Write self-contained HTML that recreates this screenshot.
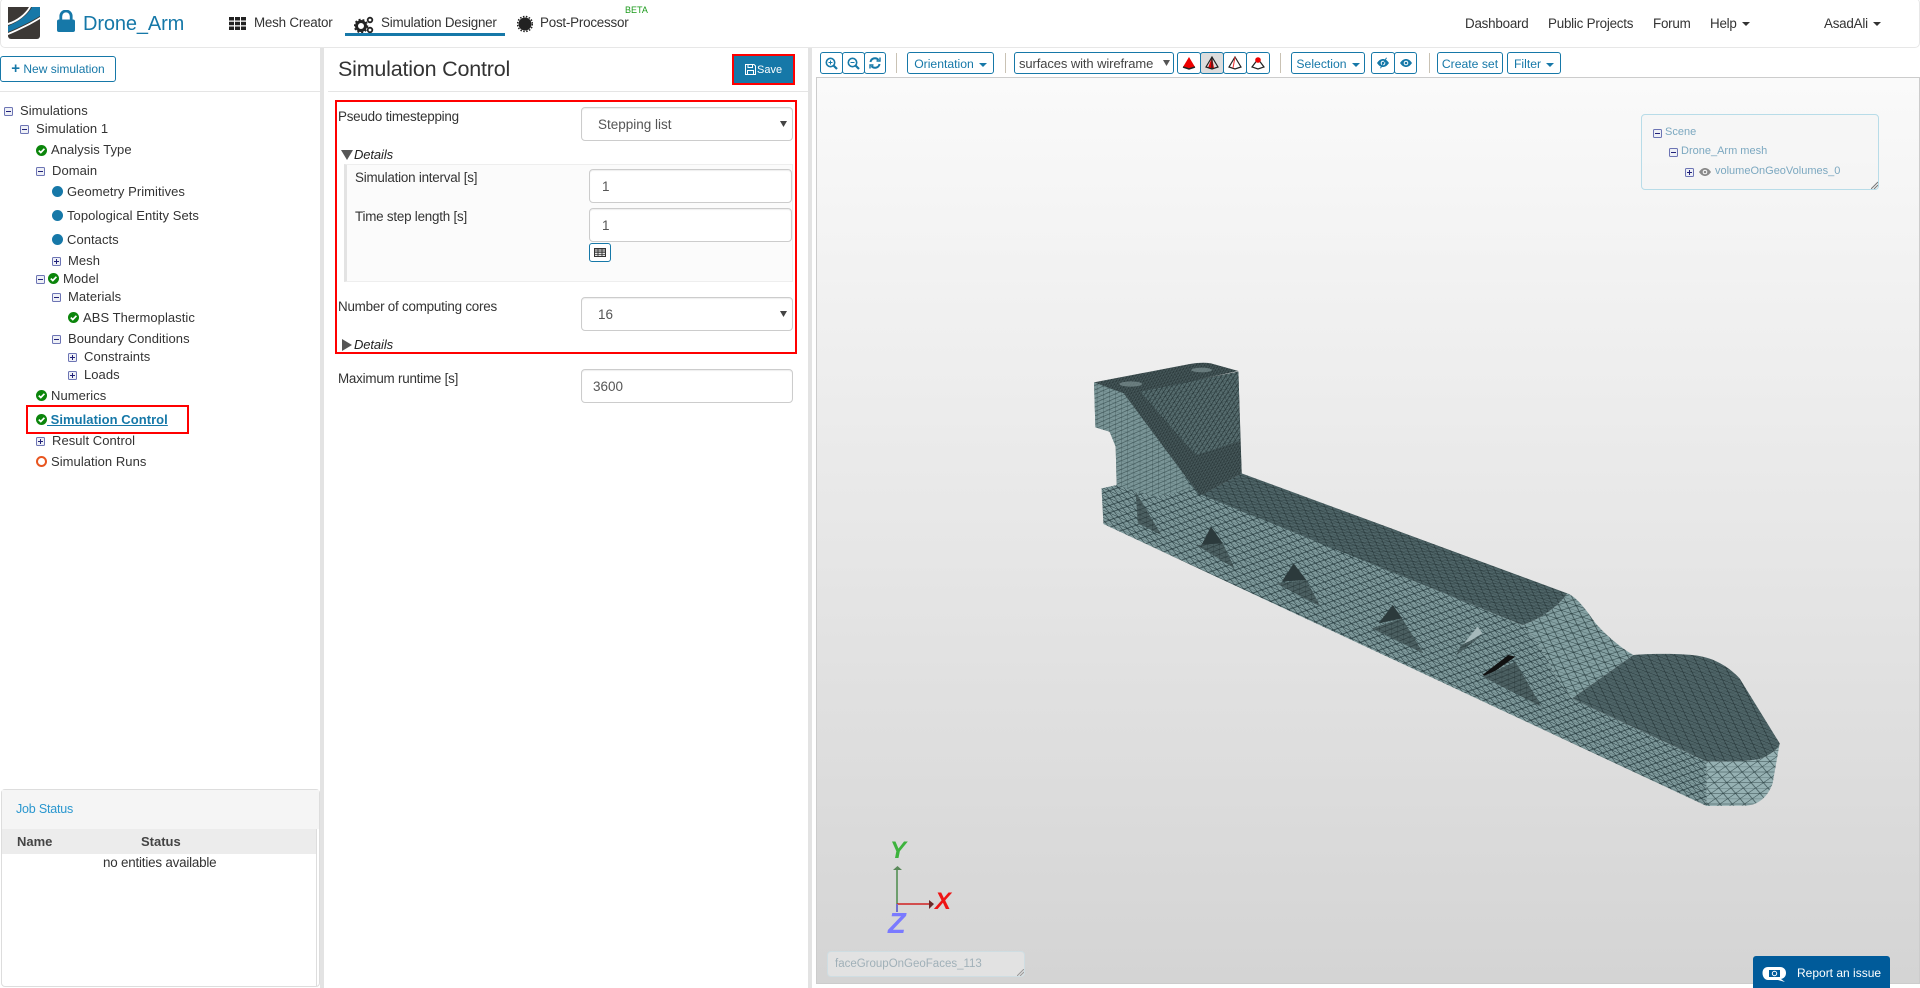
<!DOCTYPE html>
<html><head><meta charset="utf-8"><title>Drone_Arm</title>
<style>
html,body{margin:0;padding:0;width:1920px;height:988px;overflow:hidden;background:#fff;font-family:"Liberation Sans",sans-serif;color:#333;font-size:13px}
.a{position:absolute;box-sizing:border-box}
.t{position:absolute;white-space:nowrap;line-height:20px;height:20px}
.l{font-size:13.4px;letter-spacing:-.22px;color:#333}
.b{position:absolute;box-sizing:border-box;border:1px solid #1678a8;border-radius:3px;background:#fff;color:#1678a8;text-align:center;white-space:nowrap;line-height:22px;font-size:12.2px}
.inp{position:absolute;box-sizing:border-box;border:1px solid #ccc;border-radius:4px;background:#fff;color:#555;font-size:13.5px;line-height:34px;box-shadow:inset 0 1px 1px rgba(0,0,0,.07)}
.tree{font-size:13px;color:#333;letter-spacing:.05px}
.sc{color:#7ca8c0;font-size:11px}
.tg{position:absolute;width:9px;height:9px}
.caret{display:inline-block;width:0;height:0;border-left:4px solid transparent;border-right:4px solid transparent;border-top:4px solid currentColor;vertical-align:middle;margin-left:5px}
.sep{position:absolute;top:53px;width:1px;height:20px;background:#c9c2b4}
svg{position:absolute;display:block}
</style></head><body>
<svg width="0" height="0" style="position:absolute"><defs>
<symbol id="m" viewBox="0 0 9 9"><rect x=".5" y=".5" width="8" height="8" rx="1" fill="#eef0f6" stroke="#6c74b4"/><path d="M2 4.5H7" stroke="#22227a" stroke-width="1"/></symbol>
<symbol id="p" viewBox="0 0 9 9"><rect x=".5" y=".5" width="8" height="8" rx="1" fill="#eef0f6" stroke="#6c74b4"/><path d="M2 4.5H7M4.5 2V7" stroke="#22227a" stroke-width="1"/></symbol>
<symbol id="c" viewBox="0 0 11 11"><circle cx="5.5" cy="5.5" r="5.5" fill="#0b850b"/><path d="M2.8 5.6L4.8 7.5L8.4 3.8" fill="none" stroke="#fff" stroke-width="1.7"/></symbol>
<symbol id="eye" viewBox="0 0 12 8"><path d="M0 4C2 1 4 0 6 0s4 1 6 4c-2 3-4 4-6 4S2 7 0 4z" fill="currentColor"/><circle cx="6" cy="4" r="2.3" fill="#fff"/><circle cx="6" cy="4" r="1.3" fill="currentColor"/></symbol>
</defs></svg>

<!-- nav -->
<div class="a" style="left:0;top:-2px;width:1920px;height:50px;border:1px solid #e7e7e7;border-radius:5px;background:#fff"></div>
<svg style="left:8px;top:7px" width="32" height="32" viewBox="0 0 32 32"><path d="M0 0H32V29a3 3 0 0 1-3 3H3a3 3 0 0 1-3-3z" fill="#3c3835"/><path d="M24 0H32V9C24 14 12 20 0 25V19C10 15 20 8 24 0z" fill="#1678a8"/><path d="M21 0H23C19 8 10 15 0 18V16C9 13 17 7 21 0z" fill="#fff"/><path d="M0 26C12 21 24 15 32 10V12C24 17 12 23 0 28z" fill="#fff"/></svg>
<svg style="left:57px;top:10px" width="18" height="22" viewBox="0 0 18 22"><path d="M3.8 11V6.200a5.200 5.200 0 0 1 10.400 0V11" fill="none" stroke="#1678a8" stroke-width="2.800"/><rect x="0" y="9.500" width="18" height="12.500" rx="2" fill="#1678a8"/></svg>
<div class="t" style="left:83px;top:14px;font-size:20px;color:#1678a8;letter-spacing:-.12px">Drone_Arm</div>
<svg style="left:229px;top:17px" width="17" height="13" viewBox="0 0 17 13" fill="#222"><path d="M0 0h5v3.500H0zM6 0h5v3.500H6zM12 0h5v3.500h-5zM0 4.750h5v3.500H0zM6 4.750h5v3.500H6zM12 4.750h5v3.500h-5zM0 9.500h5V13H0zM6 9.500h5V13H6zM12 9.500h5V13h-5z"/></svg>
<div class="t l" style="left:254px;top:13px;color:#333">Mesh Creator</div>
<svg style="left:354px;top:16px" width="20" height="18" viewBox="0 0 20 18"><circle cx="7" cy="10" r="4.500" fill="none" stroke="#222" stroke-width="3"/><circle cx="7" cy="10" r="6.500" fill="none" stroke="#222" stroke-width="1.500" stroke-dasharray="2 2"/><circle cx="16" cy="4" r="2.300" fill="none" stroke="#222" stroke-width="1.800"/><circle cx="16" cy="14" r="2.300" fill="none" stroke="#222" stroke-width="1.800"/></svg>
<div class="t l" style="left:381px;top:13px">Simulation Designer</div>
<div class="a" style="left:345px;top:33px;width:160px;height:3px;background:#1678a8"></div>
<svg style="left:517px;top:15px" width="16" height="18" viewBox="0 0 16 18"><circle cx="8" cy="9" r="6.500" fill="#222"/><circle cx="8" cy="9" r="7.500" fill="none" stroke="#222" stroke-width="1.500" stroke-dasharray="1.500 1.500"/></svg>
<div class="t l" style="left:540px;top:13px">Post-Processor</div>
<div class="t" style="left:625px;top:0;font-size:9px;color:#1a9a1a">BETA</div>
<div class="t l" style="left:1465px;top:14px">Dashboard</div>
<div class="t l" style="left:1548px;top:14px">Public Projects</div>
<div class="t l" style="left:1653px;top:14px">Forum</div>
<div class="t l" style="left:1710px;top:14px">Help<span class="caret"></span></div>
<div class="t l" style="left:1824px;top:14px">AsadAli<span class="caret"></span></div>

<!-- separators -->
<div class="a" style="left:320px;top:48px;width:4px;height:940px;background:#e3e3e3"></div>
<div class="a" style="left:808px;top:48px;width:4px;height:940px;background:#e3e3e3"></div>
<div class="a" style="left:0;top:91px;width:320px;height:1px;background:#e5e5e5"></div>
<div class="a" style="left:328px;top:91px;width:480px;height:1px;background:#e5e5e5"></div>

<div class="b" style="left:0;top:56px;width:116px;height:26px;line-height:24px;font-size:12px"><b style="font-size:15px;line-height:12px">+</b> New simulation</div>

<!-- tree -->
<div class="tree">
<svg class="tg" style="left:4px;top:107px" width="9" height="9"><use href="#m"/></svg><div class="t" style="left:20px;top:101px">Simulations</div>
<svg class="tg" style="left:20px;top:125px" width="9" height="9"><use href="#m"/></svg><div class="t" style="left:36px;top:119px">Simulation 1</div>
<svg style="left:36px;top:145px" width="11" height="11"><use href="#c"/></svg><div class="t" style="left:51px;top:140px">Analysis Type</div>
<svg class="tg" style="left:36px;top:167px" width="9" height="9"><use href="#m"/></svg><div class="t" style="left:52px;top:161px">Domain</div>
<div class="a" style="left:52px;top:186px;width:11px;height:11px;border-radius:50%;background:#1678a8"></div><div class="t" style="left:67px;top:182px">Geometry Primitives</div>
<div class="a" style="left:52px;top:210px;width:11px;height:11px;border-radius:50%;background:#1678a8"></div><div class="t" style="left:67px;top:206px">Topological Entity Sets</div>
<div class="a" style="left:52px;top:234px;width:11px;height:11px;border-radius:50%;background:#1678a8"></div><div class="t" style="left:67px;top:230px">Contacts</div>
<svg class="tg" style="left:52px;top:257px" width="9" height="9"><use href="#p"/></svg><div class="t" style="left:68px;top:251px">Mesh</div>
<svg class="tg" style="left:36px;top:275px" width="9" height="9"><use href="#m"/></svg><svg style="left:48px;top:273px" width="11" height="11"><use href="#c"/></svg><div class="t" style="left:63px;top:269px">Model</div>
<svg class="tg" style="left:52px;top:293px" width="9" height="9"><use href="#m"/></svg><div class="t" style="left:68px;top:287px">Materials</div>
<svg style="left:68px;top:312px" width="11" height="11"><use href="#c"/></svg><div class="t" style="left:83px;top:308px">ABS Thermoplastic</div>
<svg class="tg" style="left:52px;top:335px" width="9" height="9"><use href="#m"/></svg><div class="t" style="left:68px;top:329px">Boundary Conditions</div>
<svg class="tg" style="left:68px;top:353px" width="9" height="9"><use href="#p"/></svg><div class="t" style="left:84px;top:347px">Constraints</div>
<svg class="tg" style="left:68px;top:371px" width="9" height="9"><use href="#p"/></svg><div class="t" style="left:84px;top:365px">Loads</div>
<svg style="left:36px;top:390px" width="11" height="11"><use href="#c"/></svg><div class="t" style="left:51px;top:386px">Numerics</div>
<div class="a" style="left:26px;top:405px;width:163px;height:29px;border:2px solid #f00"></div>
<svg style="left:36px;top:414px" width="11" height="11"><use href="#c"/></svg><div class="t" style="left:47px;top:410px;color:#1678a8;font-weight:bold;text-decoration:underline">&nbsp;Simulation Control</div>
<svg class="tg" style="left:36px;top:437px" width="9" height="9"><use href="#p"/></svg><div class="t" style="left:52px;top:431px">Result Control</div>
<div class="a" style="left:36px;top:456px;width:11px;height:11px;border-radius:50%;border:2px solid #e8551f"></div><div class="t" style="left:51px;top:452px">Simulation Runs</div>
</div>

<!-- job status -->
<div class="a" style="left:1px;top:789px;width:319px;height:198px;border:1px solid #ddd;border-radius:4px;background:#fff"></div>
<div class="a" style="left:2px;top:790px;width:317px;height:39px;background:#f5f5f5"></div>
<div class="t" style="left:16px;top:799px;font-size:12.5px;letter-spacing:-.2px;color:#2a97cf">Job Status</div>
<div class="a" style="left:2px;top:829px;width:314px;height:25px;background:#ececec"></div>
<div class="a" style="left:316px;top:829px;width:1px;height:157px;background:#ddd"></div>
<div class="t" style="left:17px;top:832px;font-weight:bold;color:#444">Name</div>
<div class="t" style="left:141px;top:832px;font-weight:bold;color:#444">Status</div>
<div class="t l" style="left:103px;top:853px;letter-spacing:-.2px">no entities available</div>

<!-- middle -->
<div class="t" style="left:338px;top:59px;font-size:21.5px;color:#333;letter-spacing:-.2px">Simulation Control</div>
<div class="a" style="left:732px;top:54px;width:63px;height:31px;background:#1678a8;border:2px solid #f00"></div>
<svg style="left:745px;top:64px" width="11" height="11" viewBox="0 0 11 11"><path d="M.5.500H9L10.500 2V10.500H.5z" fill="none" stroke="#fff"/><path d="M3 .5V3.500H7.500V.5M2.500 10.500V6.500H8.500V10.500" fill="none" stroke="#fff"/></svg>
<div class="t" style="left:757px;top:60px;font-size:11px;color:#fff">Save</div>
<div class="a" style="left:335px;top:100px;width:462px;height:254px;border:2px solid #f00"></div>

<div class="t l" style="left:338px;top:107px">Pseudo timestepping</div>
<div class="inp" style="left:581px;top:107px;width:212px;height:34px;padding-left:16px">Stepping list</div>
<svg style="left:780px;top:121px" width="7" height="6"><path d="M0 0H7L3.500 6z" fill="#444"/></svg>
<svg style="left:341px;top:150px" width="12" height="10"><path d="M0 0H12L6 10z" fill="#555"/></svg>
<div class="t" style="left:354px;top:145px;font-style:italic;font-size:13px;color:#222;letter-spacing:-.1px">Details</div>
<div class="a" style="left:344px;top:164px;width:449px;height:118px;background:#fbfbfb;border:1px solid #eee;border-left:3px solid #e3e3e3"></div>
<div class="t l" style="left:355px;top:168px">Simulation interval [s]</div>
<div class="inp" style="left:589px;top:169px;width:203px;height:34px;padding-left:12px">1</div>
<div class="t l" style="left:355px;top:207px">Time step length [s]</div>
<div class="inp" style="left:589px;top:208px;width:203px;height:34px;padding-left:12px">1</div>
<div class="b" style="left:589px;top:243px;width:22px;height:19px"></div>
<svg style="left:594px;top:248px" width="12" height="9" viewBox="0 0 12 9"><path d="M.5.500H11.500V8.500H.5z" fill="none" stroke="#333"/><path d="M0 1H12V3H0zM.5 4.700H11.500M.5 6.700H11.500M4 1V8.500M8 1V8.500" fill="none" stroke="#333" stroke-width=".9"/></svg>
<div class="t l" style="left:338px;top:297px">Number of computing cores</div>
<div class="inp" style="left:581px;top:297px;width:212px;height:34px;padding-left:16px">16</div>
<svg style="left:780px;top:311px" width="7" height="6"><path d="M0 0H7L3.500 6z" fill="#444"/></svg>
<svg style="left:342px;top:339px" width="10" height="12"><path d="M0 0L10 6L0 12z" fill="#555"/></svg>
<div class="t" style="left:354px;top:335px;font-style:italic;font-size:13px;color:#222;letter-spacing:-.1px">Details</div>
<div class="t l" style="left:338px;top:369px">Maximum runtime [s]</div>
<div class="inp" style="left:581px;top:369px;width:212px;height:34px;padding-left:11px">3600</div>

<!-- toolbar -->
<div class="b" style="left:820px;top:52px;width:23px;height:22px"></div><div class="b" style="left:842px;top:52px;width:23px;height:22px"></div><div class="b" style="left:864px;top:52px;width:22px;height:22px"></div>
<svg style="left:825px;top:57px" width="13" height="13" viewBox="0 0 13 13" fill="none" stroke="#1678a8"><circle cx="5.500" cy="5.500" r="4.200" stroke-width="1.600"/><path d="M8.500 8.500L12 12" stroke-width="2.200"/><path d="M3.500 5.500H7.500M5.500 3.500V7.500"/></svg>
<svg style="left:847px;top:57px" width="13" height="13" viewBox="0 0 13 13" fill="none" stroke="#1678a8"><circle cx="5.500" cy="5.500" r="4.200" stroke-width="1.600"/><path d="M8.500 8.500L12 12" stroke-width="2.200"/><path d="M3.500 5.500H7.500"/></svg>
<svg style="left:869px;top:57px" width="12" height="12" viewBox="0 0 12 12" fill="none" stroke="#1678a8" stroke-width="2"><path d="M1.500 5A4.500 4.500 0 0 1 9.500 3M10.500 7A4.500 4.500 0 0 1 2.500 9"/><path d="M11 .5V4H7.500M1 11.500V8H4.500" stroke-width="1.400"/></svg>
<div class="sep" style="left:896px"></div>
<div class="b" style="left:907px;top:52px;width:87px;height:22px">Orientation<span class="caret"></span></div>
<div class="sep" style="left:1005px"></div>
<div class="b" style="left:1014px;top:52px;width:160px;height:22px;color:#444;text-align:left;padding-left:4px;font-size:13px;letter-spacing:-.1px">surfaces with wireframe</div>
<svg style="left:1163px;top:60px" width="7" height="6"><path d="M0 0H7L3.500 6z" fill="#555"/></svg>
<div class="b" style="left:1177px;top:52px;width:24px;height:22px"></div><div class="b" style="left:1200px;top:52px;width:24px;height:22px;background:#ddd"></div><div class="b" style="left:1223px;top:52px;width:24px;height:22px"></div><div class="b" style="left:1246px;top:52px;width:24px;height:22px"></div>
<svg style="left:1182px;top:56px" width="14" height="14" viewBox="0 0 14 14"><path d="M7 1L13 11L7 13L1 11z" fill="#e00"/><path d="M1 11L7 13L13 11" fill="none" stroke="#222" stroke-width="1.500"/></svg>
<svg style="left:1205px;top:56px" width="14" height="14" viewBox="0 0 14 14"><path d="M7 1L9 12L3 12z" fill="#e00"/><path d="M7 1L13 11L7 13L1 11zM7 1V13" fill="none" stroke="#222" stroke-width="1.200"/></svg>
<svg style="left:1228px;top:56px" width="14" height="14" viewBox="0 0 14 14"><path d="M7 1L13 11L7 13L1 11z" fill="none" stroke="#222" stroke-width="1.200"/><path d="M7 1L5 12" stroke="#e33"/></svg>
<svg style="left:1251px;top:56px" width="14" height="14" viewBox="0 0 14 14"><path d="M7 3L13 11L7 13L1 11z" fill="none" stroke="#222" stroke-width="1.200"/><circle cx="7" cy="4" r="2.800" fill="#e00"/></svg>
<div class="sep" style="left:1280px"></div>
<div class="b" style="left:1291px;top:52px;width:74px;height:22px">Selection<span class="caret"></span></div>
<div class="b" style="left:1371px;top:52px;width:24px;height:22px"></div><div class="b" style="left:1394px;top:52px;width:23px;height:22px"></div>
<svg style="left:1377px;top:59px;color:#1678a8" width="12" height="8"><use href="#eye"/></svg><div class="a" style="left:1383px;top:57px;width:1px;height:12px;background:#1678a8;transform:rotate(30deg)"></div>
<svg style="left:1400px;top:59px;color:#1678a8" width="12" height="8"><use href="#eye"/></svg>
<div class="sep" style="left:1429px"></div>
<div class="b" style="left:1437px;top:52px;width:66px;height:22px">Create set</div>
<div class="b" style="left:1507px;top:52px;width:54px;height:22px">Filter<span class="caret"></span></div>

<!-- viewport -->
<div class="a" style="left:816px;top:77px;width:1104px;height:907px;border:1px solid #ccc;background:linear-gradient(#fafafa,#d4d4d4)"></div>

<svg style="left:1060px;top:340px" width="740" height="490" viewBox="0 0 1568 1470" preserveAspectRatio="none">
<defs>
<pattern id="side" width="10" height="10" patternUnits="userSpaceOnUse" patternTransform="matrix(1.9 1.23 0 2.2 0 0)"><rect width="10" height="10" fill="#7f9a9c"/><path d="M0 0H10M0 0L5 5L10 0M0 10L5 5L10 10M0 5H10" stroke="#22363a" stroke-width=".72" fill="none"/></pattern>
<pattern id="top" width="10" height="10" patternUnits="userSpaceOnUse" patternTransform="matrix(1.8 .95 1.2 -1 0 0)"><rect width="10" height="10" fill="#4f6568"/><path d="M0 0H10M0 0L5 5L10 0M0 10L5 5L10 10M0 5H10" stroke="#1f2e30" stroke-width=".55" fill="none"/></pattern>
<pattern id="tope" width="10" height="10" patternUnits="userSpaceOnUse" patternTransform="matrix(2.300 1.200 1.500 -1.200 0 0)"><rect width="10" height="10" fill="#4f6568"/><path d="M0 0H10M0 0L5 5L10 0M0 10L5 5L10 10M0 5H10" stroke="#1f2e30" stroke-width=".5" fill="none"/></pattern>
<pattern id="dense" width="10" height="10" patternUnits="userSpaceOnUse" patternTransform="matrix(1.100 -.4 .4 1.100 0 0)"><rect width="10" height="10" fill="#566c6e"/><path d="M0 0H10M0 0V10M0 10L10 0" stroke="#1c2a2c" stroke-width="1.100" fill="none"/></pattern>
<pattern id="vdense" width="10" height="10" patternUnits="userSpaceOnUse" patternTransform="matrix(.7 -.3 .3 .7 0 0)"><rect width="10" height="10" fill="#46585a"/><path d="M0 0H10M0 0V10M0 10L10 0" stroke="#141f20" stroke-width="1.200" fill="none"/></pattern>
<pattern id="block" width="10" height="10" patternUnits="userSpaceOnUse" patternTransform="matrix(1.300 .5 0 1.300 0 0)"><rect width="10" height="10" fill="#7b9698"/><path d="M0 0H10M0 0V10M0 10L10 0" stroke="#24393b" stroke-width=".8" fill="none"/></pattern>
<pattern id="cham" width="10" height="10" patternUnits="userSpaceOnUse" patternTransform="matrix(2.200 1 -1 2.400 0 0)"><rect width="10" height="10" fill="#84a0a2"/><path d="M0 0H10M0 0L5 5L10 0M0 10L5 5L10 10M0 5H10" stroke="#2a3f41" stroke-width=".6" fill="none"/></pattern>
<pattern id="end" width="10" height="10" patternUnits="userSpaceOnUse" patternTransform="matrix(2.600 0 -.7 3.200 0 0)"><rect width="10" height="10" fill="#96b1b3"/><path d="M0 0H10M0 0L5 5L10 0M0 10L5 5L10 10M0 5H10" stroke="#2f4547" stroke-width=".5" fill="none"/></pattern>
<pattern id="pock" width="10" height="10" patternUnits="userSpaceOnUse" patternTransform="matrix(1.300 .8 0 1.500 0 0)"><rect width="10" height="10" fill="#4c6062"/><path d="M0 0H10M0 0V10M0 10L10 0" stroke="#1f2d2f" stroke-width=".8" fill="none"/></pattern>
</defs>
<!-- backdrop to avoid seams -->
<path d="M135 160L378 95L385 400L300 465z" fill="#2f3f41"/>
<!-- whole side -->
<path d="M72 127L135 160L150 165L295 460L980 855L1010 900L1060 1030L1085 1075L1370 1265L1370 1398L92 552L88 445L120 435L118 320L105 275L75 262z" fill="url(#side)"/>
<path d="M72 127L150 165L235 340L280 450L200 470L120 435L118 320L105 275L75 262z" fill="url(#block)"/>
<!-- chamfer -->
<path d="M980 855C1030 830 1060 790 1075 760C1095 770 1115 810 1135 850C1160 890 1190 925 1215 945L1085 1075L1060 1030L1010 900z" fill="url(#cham)"/>
<!-- end dark -->
<path d="M1085 1075L1215 945C1260 940 1320 940 1350 947C1390 955 1420 985 1440 1015L1525 1210C1525 1225 1500 1250 1480 1258C1450 1265 1400 1265 1370 1265z" fill="url(#tope)"/>
<!-- end face -->
<path d="M1370 1265C1400 1265 1450 1265 1480 1258C1500 1250 1525 1225 1525 1210L1510 1330C1500 1370 1480 1397 1450 1397L1370 1398z" fill="url(#end)"/>
<!-- top dark -->
<path d="M300 465L385 400L1075 760C1060 790 1030 830 980 855z" fill="url(#top)"/>
<!-- block faces -->
<path d="M170 155L378 95L382 305L290 348L265 310z" fill="url(#dense)"/>
<path d="M135 160L170 155L265 310L310 460L295 465z" fill="url(#vdense)"/>
<path d="M265 310L290 345L382 302L385 400L300 465z" fill="url(#vdense)"/>
<path d="M72 127L275 72Q300 66 320 70L378 93L170 155L135 160z" fill="url(#vdense)"/>
<ellipse cx="150" cy="132" rx="24" ry="8" fill="#7c9092" opacity=".7"/><ellipse cx="300" cy="90" rx="22" ry="7" fill="#7c9092" opacity=".7"/>
<!-- pockets -->
<path d="M160 455L215 585L165 550z" fill="url(#pock)"/>
<path d="M320 560L345 610L300 615z" fill="#2c3a3c"/><path d="M288 615L345 610L370 685z" fill="url(#pock)"/>
<path d="M495 670L522 720L470 725z" fill="#2c3a3c"/><path d="M458 730L522 720L552 800z" fill="url(#pock)"/>
<path d="M705 795L725 835L675 850z" fill="#2c3a3c"/><path d="M660 865L725 835L770 940z" fill="url(#pock)"/>
<path d="M885 860L895 880L850 920z" fill="#a5b8ba"/><path d="M895 885L850 915L840 945z" fill="url(#pock)"/>
<path d="M950 945L965 950L905 1010L895 1005z" fill="#111"/><path d="M895 1010L965 965L1020 1100z" fill="url(#pock)"/>
</svg>

<!-- scene tree -->
<div class="a" style="left:1641px;top:114px;width:238px;height:76px;border:1px solid #b8dce8;border-radius:4px;background:rgba(245,245,245,.7)"></div>
<svg class="tg" style="left:1653px;top:129px" width="8" height="8"><use href="#m"/></svg><div class="t sc" style="left:1665px;top:122px">Scene</div>
<svg class="tg" style="left:1669px;top:148px" width="8" height="8"><use href="#m"/></svg><div class="t sc" style="left:1681px;top:141px">Drone_Arm mesh</div>
<svg class="tg" style="left:1685px;top:168px" width="8" height="8"><use href="#p"/></svg>
<svg style="left:1699px;top:168px;color:#8a8a8a" width="12" height="8"><use href="#eye"/></svg><div class="t sc" style="left:1715px;top:161px">volumeOnGeoVolumes_0</div>
<svg style="left:1871px;top:181px" width="7" height="8"><path d="M0 8L7 1M3 8L7 4" stroke="#777" fill="none"/></svg>

<!-- axes -->
<svg style="left:885px;top:838px" width="80" height="100" viewBox="885 838 80 100">
<path d="M897 906V870" stroke="#4a8a4a" stroke-width="1.500"/><path d="M893 870L897.500 866L902 870z" fill="#5a8a5a"/>
<path d="M897 904H930" stroke="#d02020" stroke-width="1.500"/><path d="M929 900L934 904L929 909z" fill="#6a2a2a"/>
<path d="M897 904V912" stroke="#7070d0" stroke-width="2"/>
<text x="890" y="858" font-family="Liberation Sans" font-weight="bold" font-style="italic" font-size="24" fill="#3db33d">Y</text>
<text x="935" y="909" font-family="Liberation Sans" font-weight="bold" font-style="italic" font-size="24" fill="#ee1515">X</text>
<text x="888" y="933" font-family="Liberation Sans" font-weight="bold" font-style="italic" font-size="29" fill="#7a7aff">Z</text>
</svg>

<div class="a" style="left:827px;top:951px;width:198px;height:26px;border:1px solid #cfdde2;border-radius:4px;background:#e2e2e2"></div>
<div class="t" style="left:835px;top:954px;font-size:11.500px;color:#a0b0b8">faceGroupOnGeoFaces_113</div>
<svg style="left:1017px;top:969px" width="7" height="7"><path d="M0 7L7 0M3 7L7 3" stroke="#999" fill="none"/></svg>

<!-- report -->
<div class="a" style="left:1753px;top:956px;width:137px;height:32px;background:#005b9a;border-radius:3px 3px 0 0"></div>
<svg style="left:1762px;top:966px" width="26" height="17" viewBox="0 0 26 17"><path d="M6 1H18C22 1 24 4 24 7S22 13 18 13H19L23 16L16 14H6C3 14 .5 11 .5 7S3 1 6 1z" fill="#fff"/><path d="M7 4H18V11H7z" fill="#005b9a"/><circle cx="12.500" cy="7.500" r="2.200" fill="none" stroke="#fff"/></svg>
<div class="t" style="left:1797px;top:963px;font-size:12px;color:#fff">Report an issue</div>

</body></html>
